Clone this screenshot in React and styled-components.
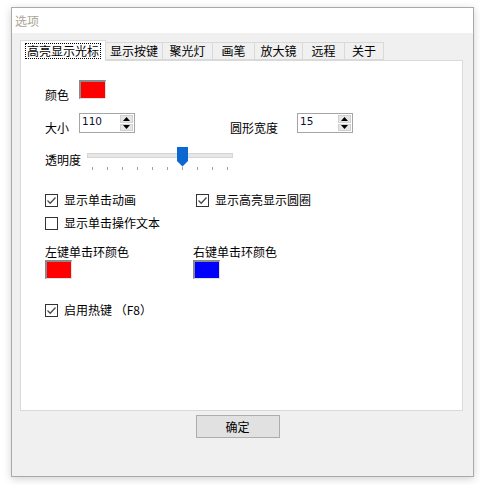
import React, { useState } from 'react';
import styled, { createGlobalStyle } from 'styled-components';

const GlobalStyle = createGlobalStyle`
  html, body {
    margin: 0;
    padding: 0;
    background: #ffffff;
  }
  body {
    font-family: "Noto Sans CJK SC", "Noto Sans", sans-serif;
    font-size: 12px;
    color: #000;
  }
`;

const Screen = styled.div`
  width: 480px;
  height: 485px;
  padding: 7px 0 0 11px;
  box-sizing: border-box;
`;

const Window = styled.div`
  width: 463px;
  height: 470px;
  box-sizing: border-box;
  border: 1px solid #a9a9a9;
  box-shadow: 0 2px 8px rgba(0, 0, 0, 0.18);
  display: flex;
  flex-direction: column;
  background: #f0f0f0;
`;

const TitleBar = styled.div`
  height: 25px;
  background: #ffffff;
  display: flex;
  align-items: center;
  padding-left: 3px;
  color: #aaa496;
  font-size: 12px;
`;

const Body = styled.div`
  flex: 1;
  padding: 7px 10px 0 8px;
  display: flex;
  flex-direction: column;
`;

const TabStrip = styled.div`
  display: flex;
  align-items: flex-end;
  height: 20px;
`;

const Tab = styled.div`
  width: ${p => p.$w}px;
  height: ${p => (p.$active ? 21 : 18)}px;
  box-sizing: border-box;
  display: flex;
  align-items: center;
  justify-content: center;
  background: ${p => (p.$active ? '#ffffff' : '#f0f0f0')};
  border: 1px solid #d9d9d9;
  border-bottom: ${p => (p.$active ? 'none' : '1px solid #d9d9d9')};
  border-left: ${p => (p.$first || p.$active ? '1px solid #d9d9d9' : 'none')};
  margin-bottom: ${p => (p.$active ? '-1px' : '0')};
  position: relative;
  z-index: ${p => (p.$active ? 1 : 0)};
  line-height: 14px;
  white-space: nowrap;
`;

const FocusText = styled.span`
  outline: 1px dotted #000;
  padding: 0 1px;
`;

const Panel = styled.div`
  height: 351px;
  box-sizing: border-box;
  background: #ffffff;
  border: 1px solid #d9d9d9;
  padding: 19px 0 0 24px;
  display: flex;
  flex-direction: column;
`;

const Row = styled.div`
  display: grid;
  grid-template-columns: ${p => p.$cols};
  align-items: start;
  margin-top: ${p => p.$mt || 0}px;
`;

const Label = styled.div`
  line-height: 16px;
  margin-top: ${p => p.$mt || 0}px;
  margin-bottom: ${p => -(p.$mt || 0)}px;
  white-space: nowrap;
`;

const Swatch = styled.div`
  width: 27px;
  height: 19px;
  box-sizing: border-box;
  background: ${p => p.$color};
  border-top: 2px solid #8a8a8a;
  border-left: 2px solid #8a8a8a;
  border-right: 1px solid #e3e3e3;
  border-bottom: 1px solid #e3e3e3;
`;

const SpinBox = styled.div`
  width: 56px;
  height: 20px;
  box-sizing: border-box;
  border: 1px solid #a5a5a5;
  background: #fff;
  display: flex;
  justify-content: space-between;
  padding: 1px 1px 1px 2px;
`;

const SpinValue = styled.span`
  font-family: "DejaVu Sans", "Liberation Sans", sans-serif;
  font-size: 10.5px;
  line-height: 12px;
  color: #101030;
`;

const SpinButtons = styled.div`
  width: 13px;
  display: flex;
  flex-direction: column;
  gap: 1px;
`;

const SpinButton = styled.div`
  flex: 1;
  background: #e6e6e6;
  border: 1px solid #d0d0d0;
  display: flex;
  align-items: center;
  justify-content: center;
`;

const SliderWrap = styled.div`
  width: 148px;
  display: flex;
  flex-direction: column;
`;

const TrackArea = styled.div`
  height: 20px;
  display: flex;
  align-items: center;
  padding-left: ${p => p.$pos}px;
  position: relative;
`;

const Track = styled.div`
  position: absolute;
  left: 0;
  right: 2px;
  top: 6px;
  height: 3px;
  background: #e7e7e7;
  border: 1px solid #d6d6d6;
`;

const Thumb = styled.svg`
  position: relative;
  z-index: 1;
  align-self: flex-start;
`;

const Ticks = styled.div`
  display: flex;
  gap: 14px;
  padding-left: 5px;
  height: 4px;
`;

const Tick = styled.div`
  width: 1px;
  height: 3px;
  background: #a0a0a0;
`;

const CheckRow = styled.label`
  display: flex;
  align-items: center;
  gap: 6px;
  line-height: 16px;
  white-space: nowrap;
`;

const Box = styled.div`
  width: 13px;
  height: 13px;
  box-sizing: border-box;
  border: 1px solid #333;
  background: #fff;
  display: flex;
  align-items: center;
  justify-content: center;
`;

const ColorGroup = styled.div`
  display: flex;
  flex-direction: column;
`;

const Footer = styled.div`
  display: flex;
  justify-content: center;
  padding-top: 4px;
  padding-right: 8px;
`;

const Button = styled.button`
  width: 84px;
  height: 23px;
  background: #e1e1e1;
  border: 1px solid #adadad;
  font-family: "Noto Sans CJK SC", sans-serif;
  font-size: 12px;
  padding: 0;
  color: #000;
`;

const tabs = [
  { label: '高亮显示光标', w: 86 },
  { label: '显示按键', w: 57 },
  { label: '聚光灯', w: 50 },
  { label: '画笔', w: 42 },
  { label: '放大镜', w: 48 },
  { label: '远程', w: 42 },
  { label: '关于', w: 39 },
];

const Arrow = ({ up }) => (
  <svg width="7" height="4" viewBox="0 0 7 4">
    <path d={up ? 'M3.5 0 L7 4 L0 4 Z' : 'M0 0 L7 0 L3.5 4 Z'} fill="#000" />
  </svg>
);

const Spinner = ({ value }) => (
  <SpinBox>
    <SpinValue>{value}</SpinValue>
    <SpinButtons>
      <SpinButton><Arrow up /></SpinButton>
      <SpinButton><Arrow /></SpinButton>
    </SpinButtons>
  </SpinBox>
);

const Check = ({ checked, children }) => (
  <CheckRow>
    <Box>
      {checked && (
        <svg width="11" height="11" viewBox="0 0 11 11">
          <path d="M1.5 5.5 L4.2 8.2 L9.5 2.5" stroke="#4a4a4a" strokeWidth="1.3" fill="none" />
        </svg>
      )}
    </Box>
    {children}
  </CheckRow>
);

const Slider = ({ pos }) => (
  <SliderWrap>
    <TrackArea $pos={pos}>
      <Track />
      <Thumb width="11" height="20" viewBox="0 0 11 20">
        <path d="M0 0 H11 V14 L5.5 19.5 L0 14 Z" fill="#0a68d0" />
      </Thumb>
    </TrackArea>
    <Ticks>
      {Array.from({ length: 10 }).map((_, i) => <Tick key={i} />)}
    </Ticks>
  </SliderWrap>
);

export default function App() {
  const [active] = useState(0);
  return (
    <>
      <GlobalStyle />
      <Screen>
        <Window>
          <TitleBar>选项</TitleBar>
          <Body>
            <TabStrip>
              {tabs.map((t, i) => (
                <Tab key={t.label} $w={t.w} $active={i === active} $first={i === 0}>
                  {i === active ? <FocusText>{t.label}</FocusText> : t.label}
                </Tab>
              ))}
            </TabStrip>
            <Panel>
              <Row $cols="34px 27px">
                <Label $mt={7}>颜色</Label>
                <Swatch $color="#ff0000" />
              </Row>
              <Row $cols="34px 56px 95px 67px 56px" $mt={14}>
                <Label $mt={7}>大小</Label>
                <Spinner value="110" />
                <span />
                <Label $mt={7}>圆形宽度</Label>
                <Spinner value="15" />
              </Row>
              <Row $cols="42px 148px" $mt={14}>
                <Label $mt={5}>透明度</Label>
                <Slider pos={90} />
              </Row>
              <Row $cols="151px 150px" $mt={21}>
                <Check checked>显示单击动画</Check>
                <Check checked>显示高亮显示圆圈</Check>
              </Row>
              <Row $cols="151px" $mt={7}>
                <Check>显示单击操作文本</Check>
              </Row>
              <Row $cols="148px 150px" $mt={13}>
                <ColorGroup>
                  <Label>左键单击环颜色</Label>
                  <Swatch $color="#ff0000" />
                </ColorGroup>
                <ColorGroup>
                  <Label>右键单击环颜色</Label>
                  <Swatch $color="#0000ff" />
                </ColorGroup>
              </Row>
              <Row $cols="200px" $mt={23}>
                <Check checked>启用热键 （F8）</Check>
              </Row>
            </Panel>
            <Footer>
              <Button>确定</Button>
            </Footer>
          </Body>
        </Window>
      </Screen>
    </>
  );
}
